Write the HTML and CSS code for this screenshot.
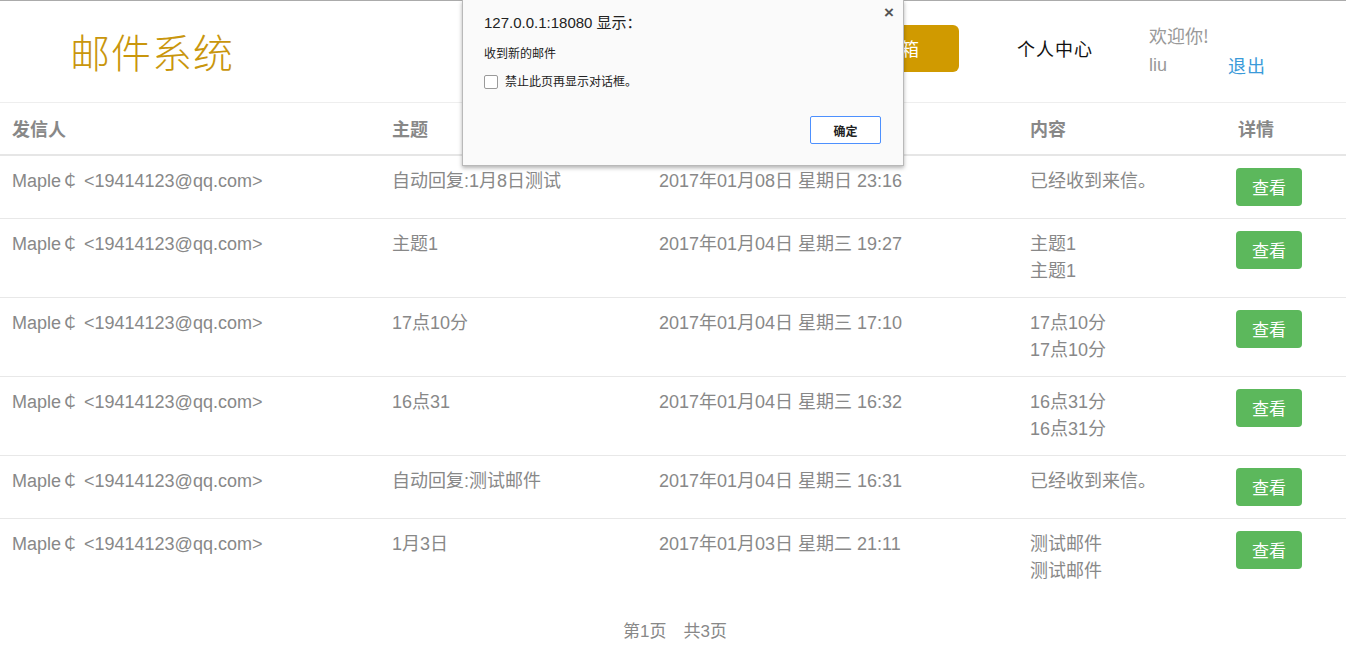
FILE: index.html
```html
<!DOCTYPE html>
<html lang="zh">
<head>
<meta charset="utf-8">
<title>邮件系统</title>
<link rel="stylesheet" href="styles.css">
</head>
<body>
<div class="topline"></div>
<header class="header">
  <div class="logo">邮件系统</div>
  <div class="right">
    <a class="btn-gold">收件箱</a>
    <a class="nav-link">个人中心</a>
    <div class="user">
      <span class="welcome">欢迎你!</span><span></span>
      <span class="uname">liu</span><a class="logout">退出</a>
    </div>
  </div>
</header>
<table class="mail-table">
  <colgroup>
    <col class="c1"><col class="c2"><col class="c3"><col class="c4"><col class="c5">
  </colgroup>
  <thead>
    <tr><th>发信人</th><th>主题</th><th>时间</th><th>内容</th><th>详情</th></tr>
  </thead>
  <tbody>
    <tr><td>Maple￠ &lt;19414123@qq.com&gt;</td><td>自动回复:1月8日测试</td><td>2017年01月08日 星期日 23:16</td><td>已经收到来信。</td><td><a class="btn-view">查看</a></td></tr>
    <tr><td>Maple￠ &lt;19414123@qq.com&gt;</td><td>主题1</td><td>2017年01月04日 星期三 19:27</td><td>主题1<br>主题1</td><td><a class="btn-view">查看</a></td></tr>
    <tr><td>Maple￠ &lt;19414123@qq.com&gt;</td><td>17点10分</td><td>2017年01月04日 星期三 17:10</td><td>17点10分<br>17点10分</td><td><a class="btn-view">查看</a></td></tr>
    <tr><td>Maple￠ &lt;19414123@qq.com&gt;</td><td>16点31</td><td>2017年01月04日 星期三 16:32</td><td>16点31分<br>16点31分</td><td><a class="btn-view">查看</a></td></tr>
    <tr><td>Maple￠ &lt;19414123@qq.com&gt;</td><td>自动回复:测试邮件</td><td>2017年01月04日 星期三 16:31</td><td>已经收到来信。</td><td><a class="btn-view">查看</a></td></tr>
    <tr><td>Maple￠ &lt;19414123@qq.com&gt;</td><td>1月3日</td><td>2017年01月03日 星期二 21:11</td><td>测试邮件<br>测试邮件</td><td><a class="btn-view">查看</a></td></tr>
  </tbody>
</table>
<div class="pager"><span>第1页</span><span>共3页</span></div>

<div class="dialog">
  <div class="dlg-close">×</div>
  <div class="dlg-title">127.0.0.1:18080 显示：</div>
  <div class="dlg-msg">收到新的邮件</div>
  <label class="dlg-check"><span class="box"></span>禁止此页再显示对话框。</label>
  <div class="dlg-actions"><button class="dlg-ok">确定</button></div>
</div>
</body>
</html>
```

FILE: styles.css
```css
html, body {
  margin: 0;
  padding: 0;
  background: #fff;
}
body {
  font-family: "Liberation Sans", Arial, "Noto Sans CJK SC", sans-serif;
  font-size: 18px;
  line-height: 27px;
  color: #888;
  position: relative;
}
.topline {
  height: 1px;
  background: #ababab;
}
.header {
  height: 101px;
  border-bottom: 1px solid #eee;
  display: flex;
  align-items: center;
}
.logo {
  margin-left: 70px;
  font-family: "Noto Sans CJK SC", sans-serif;
  font-weight: 300;
  font-size: 40px;
  line-height: 44px;
  letter-spacing: 1px;
  color: #c9960c;
  margin-top: -2px;
}
.right {
  margin-left: auto;
  margin-right: 80px;
  display: flex;
  align-items: center;
}
.btn-gold {
  display: block;
  background: #d09a00;
  color: #fff;
  border-radius: 6px;
  height: 47px;
  line-height: 47px;
  padding: 0 40px 0 19px;
  font-family: "Noto Sans CJK SC", sans-serif;
  font-size: 18px;
  margin-top: -6px;
}
.nav-link {
  margin-left: 58px;
  color: #111;
  font-family: "Noto Sans CJK SC", sans-serif;
  font-size: 18px;
  letter-spacing: 1px;
  margin-top: -7px;
}
.user {
  margin-left: 56px;
  display: grid;
  grid-template-columns: 79px auto;
  row-gap: 3px;
  line-height: 27px;
  margin-top: -2px;
}
.welcome {
  font-family: "Noto Sans CJK SC", sans-serif;
  color: #999;
  white-space: nowrap;
}
.uname {
  color: #999;
}
.logout {
  color: #3a9ad9;
  font-family: "Noto Sans CJK SC", sans-serif;
  letter-spacing: 1px;
}

.mail-table {
  width: 100%;
  border-collapse: collapse;
  table-layout: fixed;
}
.c1 { width: 380px; }
.c2 { width: 267px; }
.c3 { width: 371px; }
.c4 { width: 208px; }
.c5 { width: 120px; }
.mail-table th {
  text-align: left;
  font-family: "Noto Sans CJK SC", sans-serif;
  font-weight: 700;
  color: #888;
  padding: 12px 12px;
  border-bottom: 2px solid #e6e6e6;
  line-height: 27px;
  vertical-align: top;
}
.mail-table td {
  padding: 12px 12px;
  border-top: 1px solid #e8e8e8;
  vertical-align: top;
  line-height: 27px;
  white-space: nowrap;
}
.mail-table tbody tr:first-child td {
  border-top: 0;
}
.btn-view {
  display: inline-block;
  background: #5cb85c;
  color: #fff;
  border-radius: 4px;
  width: 66px;
  height: 38px;
  line-height: 38px;
  text-align: center;
  font-family: "Noto Sans CJK SC", sans-serif;
  font-size: 17px;
  margin-top: 0;
  margin-left: -2px;
  vertical-align: top;
}
.pager {
  display: flex;
  justify-content: center;
  gap: 17px;
  margin-top: 21px;
  font-size: 17px;
  padding-left: 4px;
}

.dialog {
  position: absolute;
  left: 462px;
  top: 0;
  width: 440px;
  height: 165px;
  background: #fafafa;
  border: 1px solid #b9b9b9;
  border-top: 0;
  box-shadow: 0 2px 4px rgba(0,0,0,0.3);
  color: #222;
  font-family: "Liberation Sans", Arial, "Noto Sans CJK SC", sans-serif;
}
.dlg-close {
  position: absolute;
  right: 9px;
  top: 2px;
  font-size: 17px;
  font-weight: 700;
  color: #555;
  line-height: 22px;
}
.dlg-title {
  margin: 12px 0 0 21px;
  font-size: 15px;
  line-height: 22px;
  color: #222;
}
.dlg-msg {
  margin: 12px 0 0 21px;
  font-size: 12px;
  line-height: 16px;
  color: #222;
}
.dlg-check {
  display: flex;
  align-items: center;
  margin: 12px 0 0 21px;
  font-size: 12px;
  line-height: 16px;
  color: #222;
}
.box {
  width: 12px;
  height: 12px;
  border: 1px solid #9a9a9a;
  border-radius: 2px;
  background: #fff;
  margin-right: 7px;
}
.dlg-actions {
  display: flex;
  justify-content: flex-end;
  margin: 26px 22px 0 0;
}
.dlg-ok {
  width: 71px;
  height: 28px;
  border: 1px solid #4d90fe;
  border-radius: 2px;
  background: #fff;
  font-family: "Noto Sans CJK SC", sans-serif;
  font-weight: 700;
  font-size: 12px;
  color: #222;
  padding: 0;
}
```
